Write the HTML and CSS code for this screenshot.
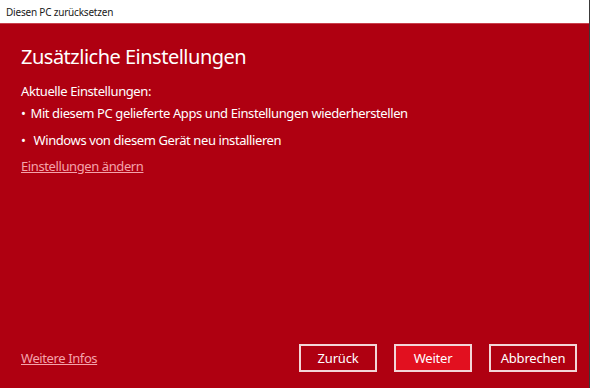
FILE: index.html
```html
<!DOCTYPE html>
<html lang="de">

<head>
    <meta charset="UTF-8">
    <title>Diesen PC zurücksetzen</title>
    <link rel="stylesheet" href="styles.css">
</head>

<body>
    <div class="window">
        <div class="titlebar">Diesen PC zurücksetzen</div>
        <div class="dialog">
            <h1 class="heading">Zusätzliche Einstellungen</h1>
            <p class="label">Aktuelle Einstellungen:</p>
            <ul class="settings">
                <li>Mit diesem PC gelieferte Apps und Einstellungen wiederherstellen</li>
                <li class="indent">Windows von diesem Gerät neu installieren</li>
            </ul>
            <a class="link" href="#">Einstellungen ändern</a>

            <div class="footer">
                <a class="link" href="#">Weitere Infos</a>
                <div class="buttons">
                    <button class="btn">Zurück</button>
                    <button class="btn primary">Weiter</button>
                    <button class="btn">Abbrechen</button>
                </div>
            </div>
        </div>
    </div>
</body>

</html>
```

FILE: styles.css
```css
html,
body {
    margin: 0;
    height: 100%;
}

body {
    font-family: "Noto Sans", "Open Sans", sans-serif;
    background-color: #af0011;
}

.window {
    display: flex;
    flex-direction: column;
    height: 100%;
    border-right: 1px solid #3a3a3a;
    box-sizing: border-box;
}

.titlebar {
    height: 24px;
    line-height: 24px;
    padding-left: 6px;
    background-color: white;
    color: #1a1a1a;
    font-size: 10px;
    letter-spacing: -0.2px;
    border-bottom: 1px solid #c9404c;
    box-sizing: border-box;
}

.dialog {
    flex: 1;
    display: flex;
    flex-direction: column;
    padding: 0 21px;
    color: white;
    letter-spacing: -0.4px;
}

.heading {
    margin: 19px 0 0;
    font-size: 20px;
    font-weight: normal;
    line-height: 28px;
    letter-spacing: -0.5px;
}

.label {
    margin: 11px 0 0;
    font-size: 13px;
    line-height: 18px;
}

.settings {
    list-style: none;
    margin: 0;
    padding: 0;
    font-size: 13px;
    line-height: 18px;
}

.settings li {
    margin-top: 4px;
}

.settings li + li {
    margin-top: 9px;
}

.settings li::before {
    content: "•";
    margin-right: 5px;
}

.settings li.indent::before {
    margin-right: 8px;
}

.link {
    color: #f4a3ab;
    font-size: 13px;
    line-height: 18px;
    text-decoration: underline;
}

.dialog > .link {
    margin-top: 8px;
    align-self: flex-start;
}

.footer {
    margin-top: auto;
    margin-bottom: 16px;
    display: flex;
    justify-content: space-between;
    align-items: center;
}

.buttons {
    display: flex;
    gap: 17px;
    margin-right: -9px;
}

.btn {
    width: 78px;
    height: 28px;
    border: 2px solid #f3d6d8;
    background-color: #af0011;
    color: white;
    font-family: inherit;
    font-size: 13px;
    letter-spacing: -0.2px;
    padding: 0;
}

.btn.primary {
    background-color: #e2101f;
}

.btn:last-child {
    width: 88px;
}
```
